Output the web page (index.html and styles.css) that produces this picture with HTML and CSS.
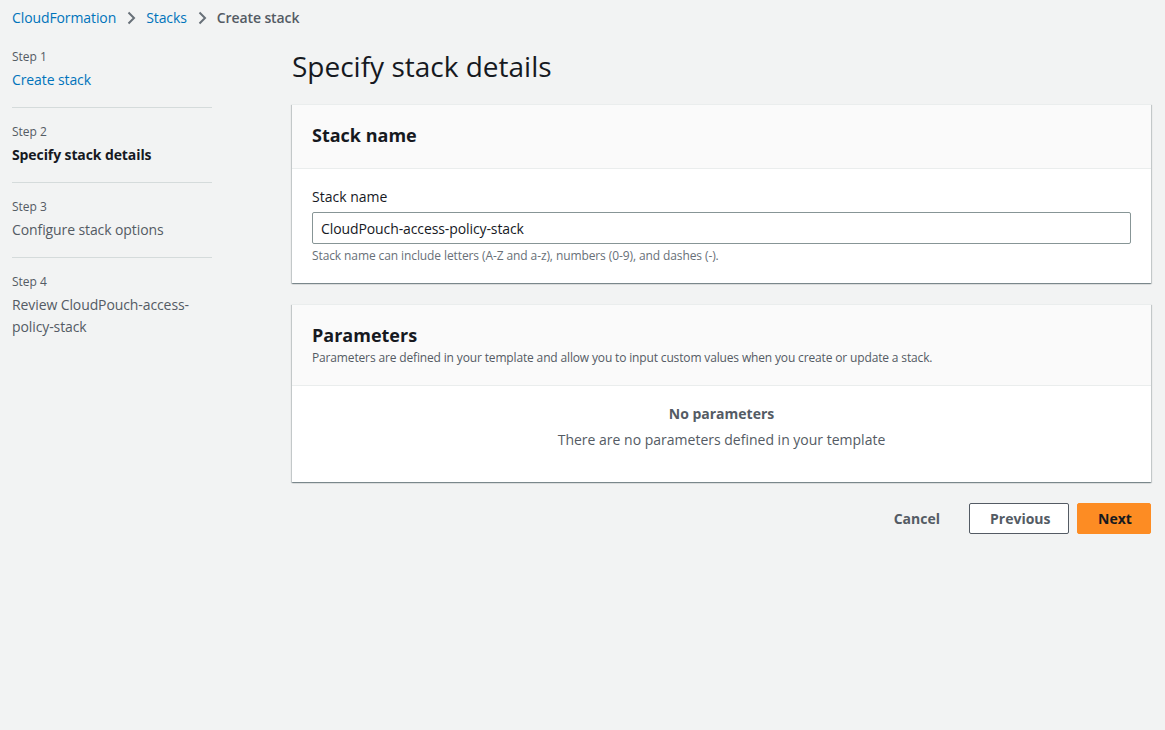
FILE: index.html
```html
<!DOCTYPE html>
<html>
<head>
<meta charset="utf-8">
<link rel="stylesheet" href="styles.css">
</head>
<body>
<div class="page">
  <nav class="crumbs">
    <a class="crumb-link">CloudFormation</a>
    <svg class="chev" width="16" height="16" viewBox="0 0 16 16"><path d="M5.5 2.5l5.5 5.5-5.5 5.5" fill="none" stroke="#687078" stroke-width="2"/></svg>
    <a class="crumb-link">Stacks</a>
    <svg class="chev" width="16" height="16" viewBox="0 0 16 16"><path d="M5.5 2.5l5.5 5.5-5.5 5.5" fill="none" stroke="#687078" stroke-width="2"/></svg>
    <span class="crumb-current">Create stack</span>
  </nav>
  <div class="layout">
    <aside class="steps">
      <div class="step">
        <div class="step-num">Step 1</div>
        <a class="step-title link">Create stack</a>
      </div>
      <div class="step">
        <div class="step-num">Step 2</div>
        <div class="step-title active">Specify stack details</div>
      </div>
      <div class="step">
        <div class="step-num">Step 3</div>
        <div class="step-title">Configure stack options</div>
      </div>
      <div class="step last">
        <div class="step-num">Step 4</div>
        <div class="step-title">Review CloudPouch-access-policy-stack</div>
      </div>
    </aside>
    <main class="main">
      <h1 class="title">Specify stack details</h1>
      <section class="card">
        <div class="card-head">
          <h2 class="card-title">Stack name</h2>
        </div>
        <div class="card-body">
          <label class="field-label">Stack name</label>
          <input class="input" type="text" value="CloudPouch-access-policy-stack">
          <div class="hint">Stack name can include letters (A-Z and a-z), numbers (0-9), and dashes (-).</div>
        </div>
      </section>
      <section class="card">
        <div class="card-head with-desc">
          <h2 class="card-title">Parameters</h2>
          <div class="card-desc">Parameters are defined in your template and allow you to input custom values when you create or update a stack.</div>
        </div>
        <div class="card-body empty">
          <div class="empty-title">No parameters</div>
          <div class="empty-text">There are no parameters defined in your template</div>
        </div>
      </section>
      <div class="actions">
        <button class="btn btn-link">Cancel</button>
        <button class="btn btn-normal">Previous</button>
        <button class="btn btn-primary">Next</button>
      </div>
    </main>
  </div>
</div>
</body>
</html>
```
FILE: styles.css
```css
* { box-sizing: border-box; }
html, body { margin: 0; padding: 0; }
body {
  background: #f2f3f3;
  font-family: "Open Sans", "Noto Sans", "Liberation Sans", sans-serif;
  color: #16191f;
  width: 1165px;
  height: 730px;
  overflow: hidden;
}
.page { padding: 0 14px 0 12px; }
.crumbs {
  display: flex;
  align-items: center;
  height: 34px;
  font-size: 14px;
  gap: 7px;
  padding-top: 1px;
  letter-spacing: -0.1px;
}
.crumb-link { color: #0073bb; }
.crumb-current { color: #545b64; font-weight: 600; }
.chev { display: block; }
.layout { display: flex; gap: 80px; }
.steps { width: 200px; flex: none; padding-top: 14px; }
.step {
  border-bottom: 1px solid #d5dbdb;
  padding: 0 0 16px 0;
  margin-bottom: 15px;
}
.step.last { border-bottom: none; }
.step-num { font-size: 12px; color: #545b64; line-height: 18px; }
.step-title { font-size: 14px; color: #545b64; line-height: 22px; margin-top: 3px; letter-spacing: -0.1px; }
.step-title.link { color: #0073bb; display: block; }
.step-title.active { color: #16191f; font-weight: 700; }
.main { flex: 1; }
.title {
  font-size: 28px;
  font-weight: 400;
  margin: 13px 0 0 0;
  line-height: 38px;
  height: 57px;
  color: #16191f;
}
.card {
  background: #fff;
  box-shadow: 0 1px 1px 0 rgba(0,28,36,.3), 1px 1px 1px 0 rgba(0,28,36,.15), -1px 1px 1px 0 rgba(0,28,36,.15);
  border-top: 1px solid #eaeded;
  margin-bottom: 21px;
}
.card-head {
  background: #fafafa;
  border-bottom: 1px solid #eaeded;
  padding: 18px 20px 21px 20px;
}
.card-head.with-desc { padding-bottom: 18px; }
.card-title { font-size: 18px; font-weight: 700; margin: 0; line-height: 24px; }
.card-desc { font-size: 12px; color: #545b64; line-height: 18px; margin-top: 2px; letter-spacing: -0.15px; }
.card-body { padding: 17px 20px 18px 20px; }
.field-label { display: block; font-size: 14px; line-height: 22px; color: #16191f; margin-bottom: 4px; }
.input {
  display: block;
  width: 100%;
  height: 32px;
  border: 1px solid #879596;
  border-radius: 2px;
  padding: 0 8px;
  font-family: inherit;
  font-size: 14px;
  color: #16191f;
  background: #fff;
  letter-spacing: -0.1px;
}
.hint { font-size: 12px; color: #687078; line-height: 18px; margin-top: 3px; letter-spacing: -0.1px; }
.card-body.empty { text-align: center; padding: 17px 20px 31px; color: #545b64; }
.empty-title { font-size: 14px; font-weight: 700; line-height: 22px; }
.empty-text { font-size: 14px; line-height: 22px; margin-top: 4px; }
.actions { display: flex; justify-content: flex-end; align-items: center; gap: 8px; }
.btn {
  font-family: inherit;
  font-size: 14px;
  font-weight: 700;
  height: 31px;
  border-radius: 2px;
  padding: 0 20px;
  cursor: pointer;
}
.btn-link { background: transparent; border: 1px solid transparent; color: #545b64; }
.btn-normal { background: #fff; border: 1px solid #545b64; color: #545b64; width: 100px; }
.btn-primary { background: #fd8c23; border: 1px solid #fd8c23; color: #16191f; width: 74px; }
```
